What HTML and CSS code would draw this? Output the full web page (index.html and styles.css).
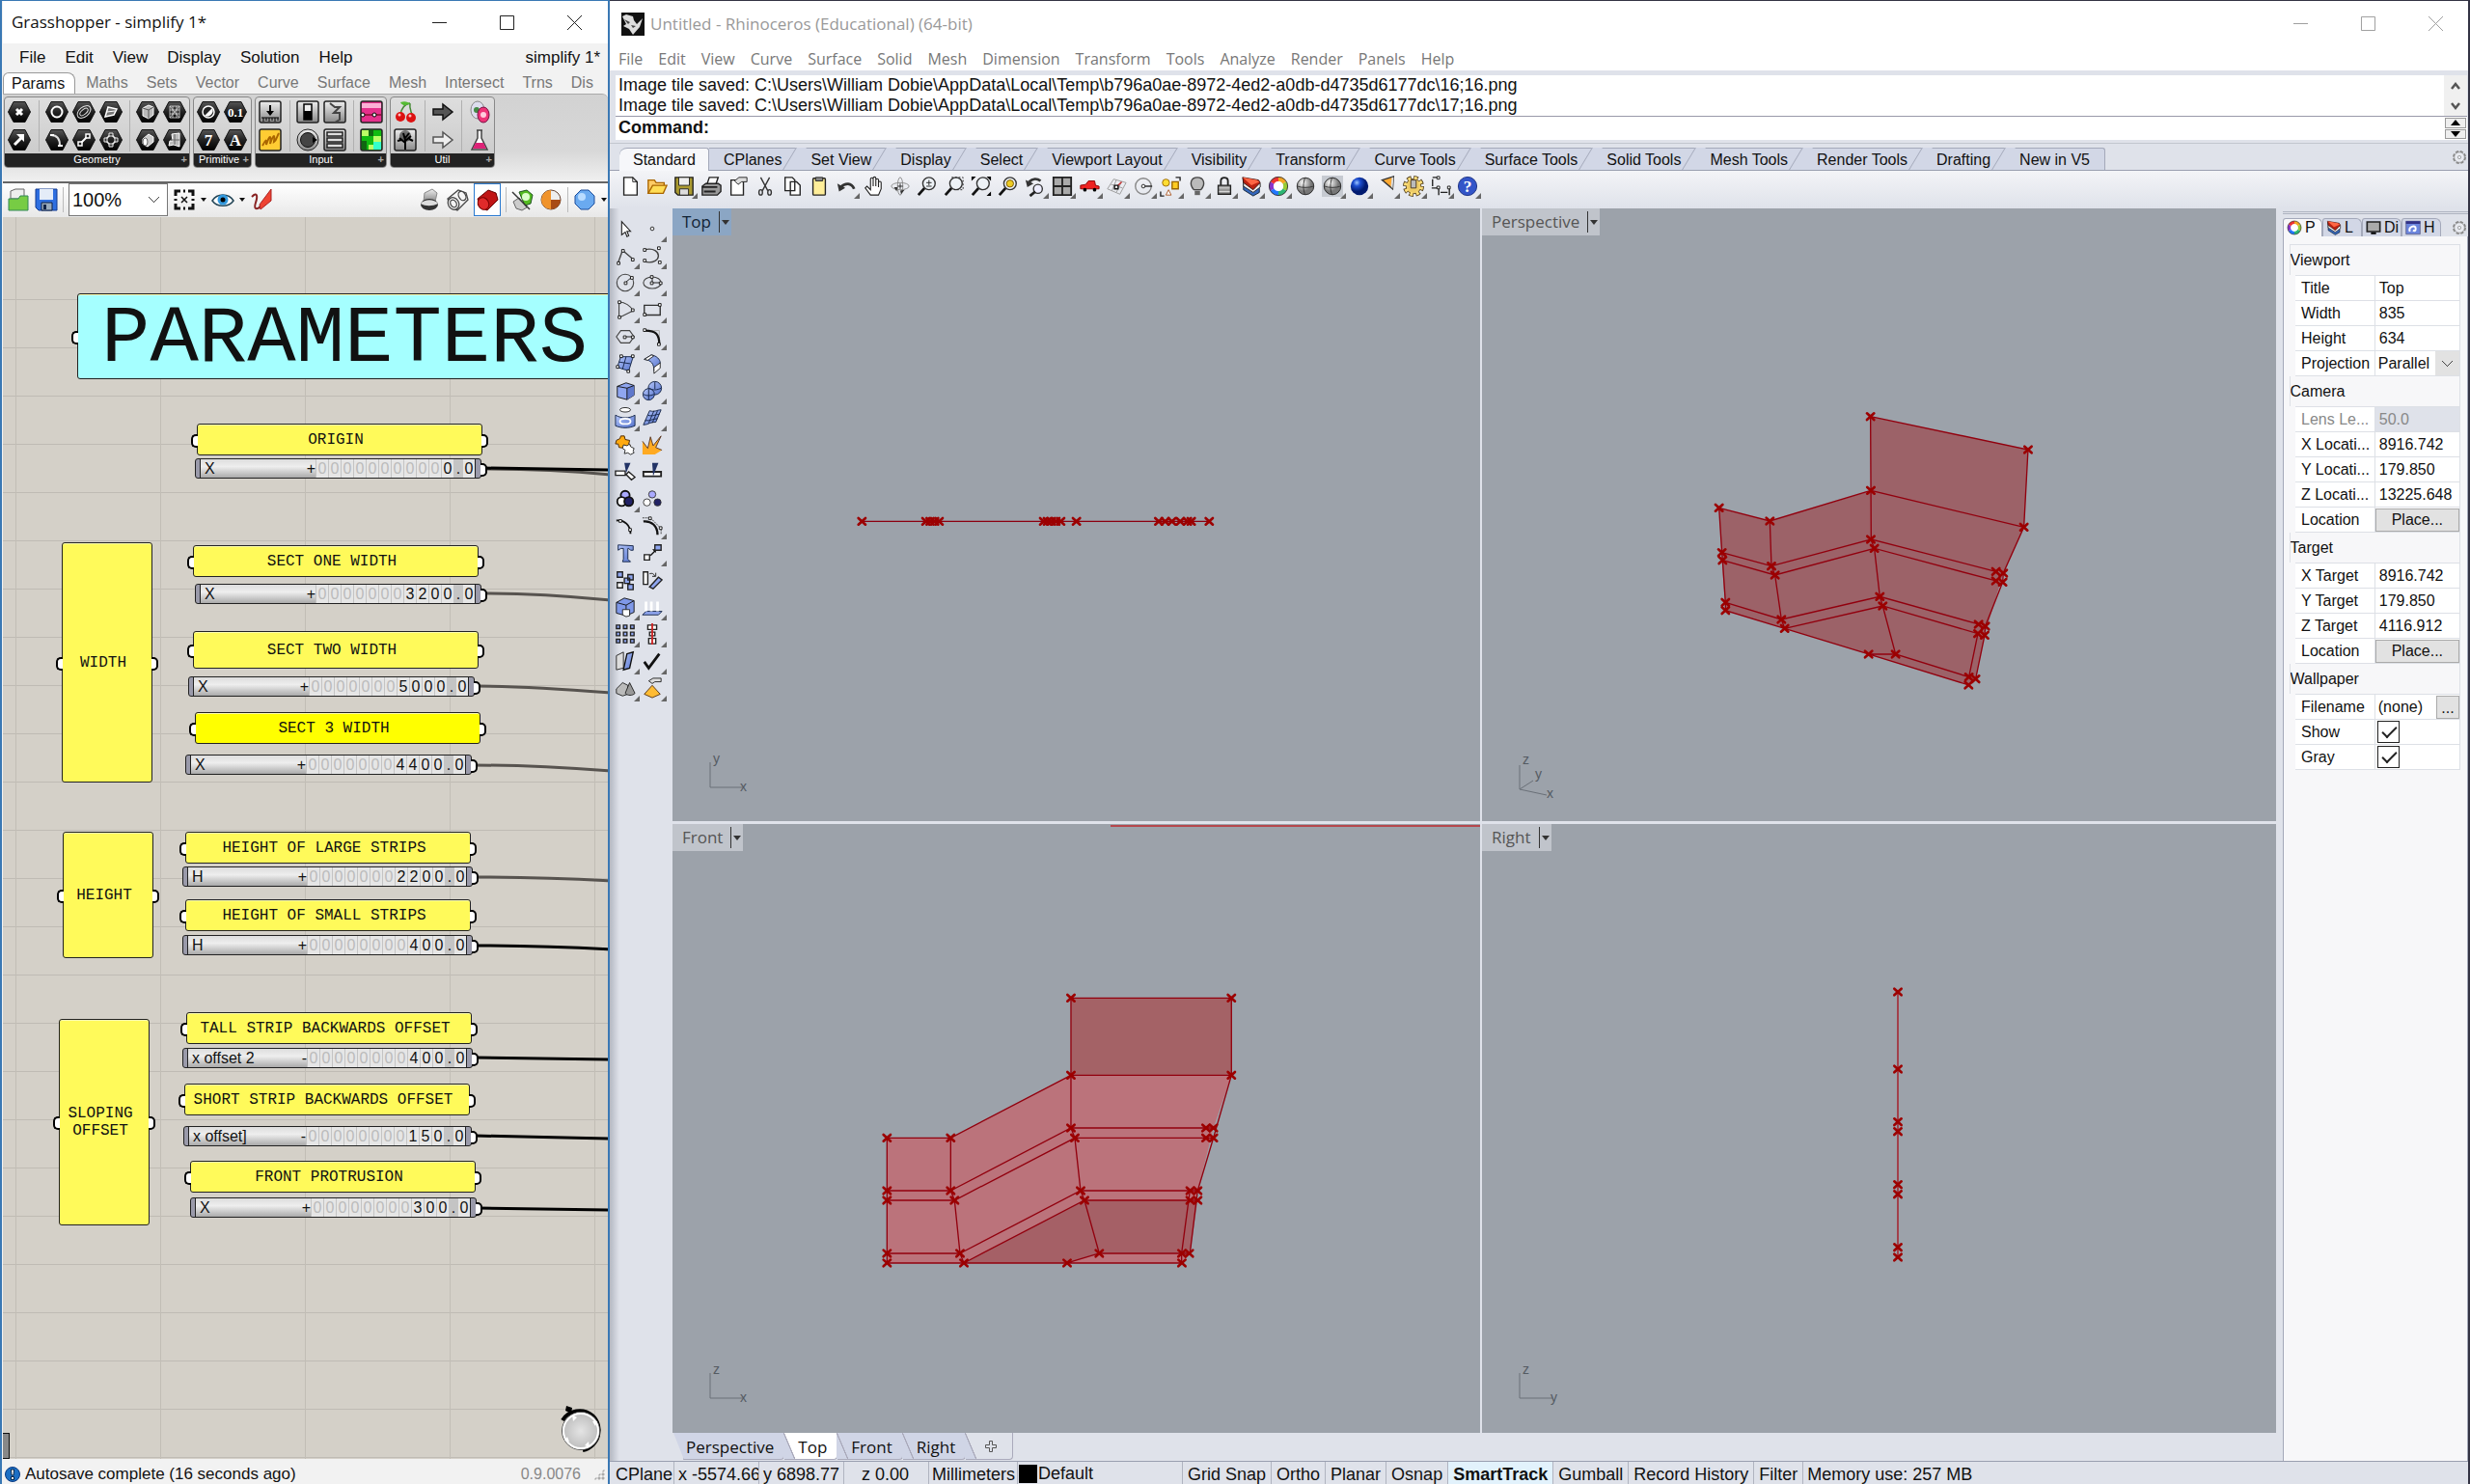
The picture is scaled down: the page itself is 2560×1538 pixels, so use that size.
FILE: index.html
```html
<!DOCTYPE html>
<html lang="en">
<head>
<meta charset="utf-8">
<title>Grasshopper and Rhinoceros</title>
<link rel="stylesheet" href="styles.css">
</head>
<body>
<svg class="defs" aria-hidden="true">
  <defs>
    <linearGradient id="dark" x1="0" y1="0" x2="0" y2="1"><stop offset="0" stop-color="#555"/><stop offset=".5" stop-color="#222"/><stop offset="1" stop-color="#000"/></linearGradient>
    <linearGradient id="metal" x1="0" y1="0" x2="0" y2="1"><stop offset="0" stop-color="#eee"/><stop offset="1" stop-color="#888"/></linearGradient>
    <linearGradient id="blue" x1="0" y1="0" x2="1" y2="1"><stop offset="0" stop-color="#b4c6fa"/><stop offset="1" stop-color="#5472cc"/></linearGradient>
    <radialGradient id="ballgrey" cx=".35" cy=".3"><stop offset="0" stop-color="#fff"/><stop offset="1" stop-color="#777"/></radialGradient>
    <radialGradient id="ballblue" cx=".35" cy=".3"><stop offset="0" stop-color="#9bc4ff"/><stop offset=".4" stop-color="#1d4ed0"/><stop offset="1" stop-color="#001a70"/></radialGradient>
    <radialGradient id="knob"><stop offset="0" stop-color="#e4e4e4"/><stop offset="1" stop-color="#bcbcbc"/></radialGradient>
    <symbol id="hex" viewBox="0 0 24 22"><path d="M6 .5h12L23.500 11 18 21.500H6L.5 11z" fill="url(#dark)" stroke="#111"/></symbol>
    <symbol id="box" viewBox="0 0 24 24"><rect x="1" y="1" width="22" height="22" rx="2" fill="url(#metal)" stroke="#222" stroke-width="1.500"/></symbol>
    <g id="x"><path d="M3 4 25 24M3 24 25 4" stroke="#9c0000" stroke-width="8" stroke-linecap="round"/></g>
    <symbol id="wheel" viewBox="0 0 24 24"><g fill="none" stroke-width="5"><path d="M12 4a8 8 0 0 1 7 4" stroke="#f5a623"/><path d="M19 8a8 8 0 0 1 0 8" stroke="#9c3"/><path d="M19 16a8 8 0 0 1-7 4" stroke="#2bb673"/><path d="M12 20a8 8 0 0 1-7-4" stroke="#27f"/><path d="M5 16a8 8 0 0 1 0-8" stroke="#83c"/><path d="M5 8a8 8 0 0 1 7-4" stroke="#e33"/></g><circle cx="12" cy="12" r="10.500" fill="none" stroke="#333"/><circle cx="12" cy="12" r="5.500" fill="#fff"/></symbol>
    <symbol id="layers" viewBox="0 0 24 24"><path d="M3 4v12l11 7 7-4v-8z" fill="#36b" stroke="#123"/><path d="M3 3v9l11 7 8-6V9z" fill="#eee" stroke="#222"/><path d="M2 2l1 6 11 8 8-8-2-3z" fill="#b21" stroke="#311"/><path d="M2 2l10 9 9-4-3-2z" fill="#f64"/></symbol>
    <symbol id="gear" viewBox="0 0 24 24"><circle cx="12" cy="12" r="9" fill="none" stroke="#888" stroke-width="3" stroke-dasharray="4.700 2.370"/><circle cx="12" cy="12" r="8" fill="#e8eaf0" stroke="#888"/><circle cx="12" cy="12" r="2.500" fill="none" stroke="#888"/></symbol>
    <symbol id="lens" viewBox="0 0 24 24"><path d="M9 14 2 22" stroke="#111" stroke-width="3"/><circle cx="14" cy="9" r="7" fill="#eef4f8" fill-opacity=".7" stroke="#333" stroke-width="1.500"/></symbol>
  </defs>
</svg>

<div class="desktop">
<section class="gh" aria-label="Grasshopper">
  <header class="titlebar">
    <h1>Grasshopper - simplify 1*</h1>
    <div class="winbtns">
      <button aria-label="Minimize"><svg viewBox="0 0 16 16"><path d="M0 8h16"/></svg></button>
      <button aria-label="Maximize"><svg viewBox="0 0 16 16"><path d="M.5.5h15v15H.5z"/></svg></button>
      <button aria-label="Close"><svg viewBox="0 0 16 16"><path d="M0 0l16 16M16 0 0 16"/></svg></button>
    </div>
  </header>
  <nav class="gh-menu">
    <button>File</button><button>Edit</button><button>View</button><button>Display</button><button>Solution</button><button>Help</button>
    <span class="doc">simplify 1*</span>
  </nav>
  <nav class="gh-tabs">
    <button class="on">Params</button><button>Maths</button><button>Sets</button><button>Vector</button><button>Curve</button><button>Surface</button><button>Mesh</button><button>Intersect</button><button>Trns</button><button>Dis</button>
  </nav>
  <div class="ribbon">
    <section class="group g-geo">
      <div class="cells">
        <div class="cols c1">
          <svg viewBox="0 0 24 22"><use href="#hex"/><path d="M9 8l6 6M15 8l-6 6" stroke="#fff" stroke-width="3"/></svg>
          <svg viewBox="0 0 24 22"><use href="#hex"/><path d="M7 16l7-7" stroke="#fff" stroke-width="3"/><path d="M17 5v8l-8-8z" fill="#fff"/></svg>
        </div>
        <div class="cols c3">
          <svg viewBox="0 0 24 22"><use href="#hex"/><circle cx="12" cy="11" r="5.500" fill="none" stroke="#fff" stroke-width="2"/></svg>
          <svg viewBox="0 0 24 22"><use href="#hex"/><g fill="none" stroke="#ddd" transform="rotate(-40 12 11)"><ellipse cx="12" cy="11" rx="8" ry="5"/><ellipse cx="12" cy="11" rx="5" ry="2.500"/></g></svg>
          <svg viewBox="0 0 24 22"><use href="#hex"/><path d="M9 6l9 2-3 6-9 2z" fill="#777" stroke="#fff" stroke-width="1.500"/><path d="M8 11l8-1" stroke="#fff"/></svg>
          <svg viewBox="0 0 24 22"><use href="#hex"/><path d="M6 6c6 0 9 4 9 11" fill="none" stroke="#ddd" stroke-width="2"/><path d="M5 6h4M13 17h5" stroke="#fff" stroke-width="2"/></svg>
          <svg viewBox="0 0 24 22"><use href="#hex"/><path d="M8 15l8-8" stroke="#fff" stroke-width="2"/><path d="M6 13h4v4H6zM14 5h4v4h-4z" fill="#222" stroke="#fff" stroke-width="1.500"/></svg>
          <svg viewBox="0 0 24 22"><use href="#hex"/><path d="M12 5l6 6-6 6-6-6z" fill="none" stroke="#eee" stroke-width="1.500"/><path d="M10 4h4v3h-4zM10 15h4v3h-4zM5 9h3v4H5zM16 9h3v4h-3z" fill="#333" stroke="#eee"/></svg>
        </div>
        <div class="cols c2">
          <svg viewBox="0 0 24 22"><use href="#hex"/><path d="M7 7l6-3 5 2v8l-5 4-6-3z" fill="#bbb" stroke="#fff"/><path d="M13 9v9M7 7l6 2 5-3" stroke="#555" fill="none"/></svg>
          <svg viewBox="0 0 24 22"><use href="#hex"/><path d="M7 5h10v12H7zM10 5v12M14 5v12M7 9h10M7 13h10M7 5l10 12M17 5L7 17" fill="none" stroke="#ddd" stroke-width=".8"/></svg>
          <svg viewBox="0 0 24 22"><use href="#hex"/><path d="M7 10l6-5 5 3v5l-6 5-5-3z" fill="#ccc" stroke="#fff"/><ellipse cx="9.500" cy="13" rx="2.500" ry="4" fill="#fff" stroke="#666"/></svg>
          <svg viewBox="0 0 24 22"><use href="#hex"/><path d="M9 5l8-1v14l-6-2-5 1 1-5h3z" fill="#bbb" stroke="#fff"/><path d="M12 5v11M8 11h9" stroke="#666"/></svg>
        </div>
      </div>
      <h2>Geometry<b>+</b></h2>
    </section>
    <section class="group g-prim">
      <div class="cells">
        <div class="cols c2">
          <svg viewBox="0 0 24 22"><use href="#hex"/><circle cx="12" cy="11" r="6" fill="#222" stroke="#fff" stroke-width="1.500"/><path d="M16 7a6 6 0 0 1-8 8z" fill="#fff"/></svg>
          <svg viewBox="0 0 24 22"><use href="#hex"/><text class="hx mid" x="12" y="16">0.1</text></svg>
          <svg viewBox="0 0 24 22"><use href="#hex"/><text class="hx big" x="12" y="17">7</text></svg>
          <svg viewBox="0 0 24 22"><use href="#hex"/><text class="hx big" x="12" y="17">A</text></svg>
        </div>
      </div>
      <h2>Primitive<b>+</b></h2>
    </section>
    <section class="group g-in">
      <div class="cells">
        <div class="cols c1">
          <svg viewBox="0 0 24 24"><use href="#box"/><path d="M12 5v8" stroke="#000" stroke-width="2"/><path d="M8 11h8l-4 5z"/><path d="M3 18h18M5 18v4M8 18v3M11 18v4M14 18v3M17 18v4M20 18v3" stroke="#000"/></svg>
          <svg viewBox="0 0 24 24"><rect x="1" y="1" width="22" height="22" rx="2" fill="#fc3" stroke="#222" stroke-width="1.500"/><path d="M4 18c4-7 4-7 4-1 4-12 5-9 4-1 4-12 5-9 4-2 3-2 3-6 5-9" fill="none" stroke="#a60" stroke-width="2"/></svg>
        </div>
        <div class="cols c2">
          <svg viewBox="0 0 24 24"><use href="#box"/><path d="M8 4h8v16H8z" fill="#eee" stroke="#000" stroke-width="1.500"/><path d="M8 11h8v9H8z"/></svg>
          <svg viewBox="0 0 24 24"><use href="#box"/><path d="M7 3l5 4h5l-6 6h6v7l-5 3" fill="none" stroke="#444" stroke-width="2"/></svg>
          <svg viewBox="0 0 24 24"><circle cx="12" cy="12" r="11" fill="url(#metal)" stroke="#222"/><circle cx="12" cy="12" r="7.500" fill="#444" stroke="#111"/><path d="M17 9l5 3-5 3z"/></svg>
          <svg viewBox="0 0 24 24"><use href="#box"/><path d="M4 4h16v4H4zM4 10h16v4H4zM4 16h16v4H4z" fill="#ddd" stroke="#222" stroke-width="1.500"/></svg>
        </div>
        <div class="cols c1">
          <svg viewBox="0 0 24 24"><rect x="1" y="1" width="22" height="22" rx="2" fill="#e5308c" stroke="#222" stroke-width="1.500"/><path d="M2 3h20v5H2z" fill="#fbb0d5"/><path d="M2 15h20" stroke="#500"/><circle cx="3" cy="15" r="2" fill="#fff" stroke="#000"/><circle cx="15" cy="15" r="2" fill="#fff" stroke="#000"/></svg>
          <svg viewBox="0 0 24 24"><rect x="1" y="1" width="22" height="22" rx="2" fill="#1b1" stroke="#222" stroke-width="1.500"/><path d="M2 2h7v6H2zM14 8h8v6h-8zM9 17h5v5H9z" fill="#bf6"/><path d="M9 2h5v6H9zM2 13h5v9H2z" fill="#161"/><path d="M14 14h8v8h-8z" fill="#3fc"/></svg>
        </div>
      </div>
      <h2>Input<b>+</b></h2>
    </section>
    <section class="group g-util">
      <div class="cells">
        <div class="cols c1">
          <svg viewBox="0 0 24 24"><path d="M7 15C8 8 11 4 17 3M17 3c-1 5 1 8 2 12" fill="none" stroke="#483" stroke-width="1.500"/><path d="M7 2c5-2 8 0 10 1-4 3-8 3-10-1z" fill="#5b3"/><circle cx="7" cy="17" r="5" fill="#d11"/><circle cx="18" cy="18" r="5" fill="#d11"/><circle cx="6" cy="15" r="1.500" fill="#fbb"/><circle cx="17" cy="16" r="1.500" fill="#fbb"/></svg>
          <svg viewBox="0 0 24 24"><use href="#box"/><path d="M12 22V12M12 15L6 10M12 13l6-5M12 12l-2-7M12 10l4-5M8 12l-4 1M16 11l4 2" stroke="#000" stroke-width="2"/><circle cx="12" cy="8" r="6" fill="#000" fill-opacity=".5"/></svg>
        </div>
        <div class="cols c1">
          <svg viewBox="0 0 24 24"><path d="M2 9h10V4l10 8-10 8v-5H2z" fill="#555" stroke="#111" stroke-width="1.500"/></svg>
          <svg viewBox="0 0 24 24"><path d="M2 9h10V4l10 8-10 8v-5H2z" fill="#eee" stroke="#555" stroke-width="1.500"/></svg>
        </div>
        <div class="cols c1">
          <svg viewBox="0 0 24 24"><ellipse cx="10" cy="10" rx="7" ry="9" fill="#dde" stroke="#888"/><circle cx="9" cy="10" r="3" fill="#484"/><ellipse cx="16" cy="15" rx="6" ry="8" fill="#e37" stroke="#714"/><circle cx="16" cy="15" r="3" fill="#fcd"/></svg>
          <svg viewBox="0 0 24 24"><path d="M9 2h6M10 2v8L4 22h16L14 10V2" fill="#fff" stroke="#444" stroke-width="1.500"/><path d="M8 15h8l3 6H5z" fill="#d27"/></svg>
        </div>
      </div>
      <h2>Util<b>+</b></h2>
    </section>
  </div>
  <div class="gh-bar">
    <button aria-label="Open"><svg viewBox="0 0 24 24"><path d="M4 9V3l5-2h9v10H4z" fill="#eee" stroke="#666"/><path d="M2 23V11h10l2-3h8v15z" fill="#7c4" stroke="#385"/></svg></button>
    <button aria-label="Save"><svg viewBox="0 0 24 24"><path d="M1 1h22v22H4l-3-3z" fill="#2f6fe0" stroke="#123a90"/><path d="M5 1h14v11H5z" fill="#e4ecf8"/><path d="M7 15h11v8H7z" fill="#9ab" stroke="#124"/><path d="M9 17h3v5H9z" fill="#124"/></svg></button>
    <i class="rule"></i>
    <select class="zoom" aria-label="Zoom"><option>100%</option></select>
    <button aria-label="Zoom extents"><svg viewBox="0 0 24 24"><path d="M3 8V3h5M16 3h5v5M21 16v5h-5M8 21H3v-5M3 11v2M21 11v2M11 3h2M11 21h2" fill="none" stroke="#111" stroke-width="3"/><path d="M9 9l6 6M15 9l-6 6" stroke="#111" stroke-width="1.500"/></svg></button><i class="drop"></i>
    <button aria-label="Named views"><svg viewBox="0 0 24 24"><path d="M1 13C6 5 18 5 23 13 18 20 6 20 1 13z" fill="#fff" stroke="#245" stroke-width="1.500"/><circle cx="12" cy="12" r="5.500" fill="#39d"/><circle cx="12" cy="12" r="2.500"/></svg></button><i class="drop"></i>
    <button aria-label="Sketch"><svg viewBox="0 0 24 24"><path d="M2 9c6-6 6 0 4 6s0 9 6 3" fill="none" stroke="#822" stroke-width="2"/><path d="M22 1v12L11 22l-1-5z" fill="#e43" stroke="#a22"/></svg></button>
    <span class="grow"></span>
    <button aria-label="No preview"><svg viewBox="0 0 24 24"><path d="M7 5l8-4 5 4-2 9H6z" fill="url(#metal)" stroke="#888"/><ellipse cx="12" cy="17" rx="9" ry="6" fill="#333"/><path d="M3 16c4-5 14-5 18 0-6 3-13 3-18 0z" fill="#ddd"/></svg></button>
    <button aria-label="Wireframe preview"><svg viewBox="0 0 24 24"><g fill="#f4f4f4" stroke="#444" stroke-width="1.300"><path d="M2 11L13 2l8 3 2 7-11 11-7-3z"/><ellipse cx="17" cy="8" rx="3.500" ry="5" transform="rotate(-30 17 8)"/><ellipse cx="8" cy="16" rx="5.500" ry="6.500" transform="rotate(-30 8 16)"/><ellipse cx="8" cy="16" rx="3" ry="4" transform="rotate(-30 8 16)"/></g></svg></button>
    <button class="picked" aria-label="Shaded preview"><svg viewBox="0 0 24 24"><path d="M2 11L13 2l8 3 2 7-11 11-7-3z" fill="#c01515" stroke="#600"/><ellipse cx="8" cy="16" rx="5.500" ry="6.500" transform="rotate(-30 8 16)" fill="#e02a2a" stroke="#700"/></svg></button>
    <i class="rule"></i>
    <button aria-label="Preview selected"><svg viewBox="0 0 24 24"><path d="M8 4l8-2 6 5-2 9-6 2z" fill="#5b2" stroke="#252"/><circle cx="15" cy="9" r="4" fill="#dfc"/><path d="M2 14l6-4 8 10-5 3-6-2z" fill="#ccc" stroke="#666"/><path d="M1 4l18 18" stroke="#333" stroke-width="1.500"/></svg></button>
    <button aria-label="Preview quality"><svg viewBox="0 0 24 24"><circle cx="12" cy="12" r="10" fill="#eee" stroke="#643"/><path d="M12 2a10 10 0 0 0 0 20z" fill="#f0932b"/><path d="M12 12h10a10 10 0 0 1-10 10z" fill="#a84b16"/></svg></button>
    <i class="rule"></i>
    <button aria-label="Mesh quality"><svg viewBox="0 0 24 24"><path d="M8 2h8l6 6v8l-6 6H8l-6-6V8z" fill="#6aaaf0" stroke="#1c4d9a"/><circle cx="9" cy="9" r="4" fill="#b9dcff"/></svg></button><i class="drop"></i>
  </div>

  <div class="canvas">
    <svg class="wires" aria-hidden="true">
      <g fill="none" stroke="#57534f" stroke-width="3">
        <path d="M498 261c50 0 90 2 132 6"/><path d="M498 390c50 0 90 3 132 7"/><path d="M490 486c50 0 90 3 140 7"/><path d="M487 568c50 0 90 2 143 6"/><path d="M489 684c50 0 90 1 141 4"/>
      </g>
      <g fill="none" stroke="#000" stroke-width="3">
        <path d="M498 260l132 2"/><path d="M489 755c50 0 90 1 141 4"/><path d="M489 871l141 2"/><path d="M489 952l141 3"/><path d="M493 1027l137 2"/>
      </g>
    </svg>
    <div class="node title" style="left:77px;top:79px;width:700px;height:89px">PARAMETERS</div>
    <div class="node" style="left:201px;top:214px;width:296px;height:33px">ORIGIN</div>
    <div class="slider" style="left:199px;top:250px;width:297px"><label>X</label><output>+<i>0</i><i>0</i><i>0</i><i>0</i><i>0</i><i>0</i><i>0</i><i>0</i><i>0</i><i>0</i><b>0</b><u>.</u><b>0</b></output></div>
    <div class="node" style="left:61px;top:337px;width:94px;height:249px">WIDTH</div>
    <div class="node" style="left:197px;top:340px;width:296px;height:33px">SECT ONE WIDTH</div>
    <div class="slider" style="left:199px;top:380px;width:297px"><label>X</label><output>+<i>0</i><i>0</i><i>0</i><i>0</i><i>0</i><i>0</i><i>0</i><b>3</b><b>2</b><b>0</b><b>0</b><u>.</u><b>0</b></output></div>
    <div class="node" style="left:197px;top:429px;width:296px;height:39px">SECT TWO WIDTH</div>
    <div class="slider" style="left:192px;top:476px;width:297px"><label>X</label><output>+<i>0</i><i>0</i><i>0</i><i>0</i><i>0</i><i>0</i><i>0</i><b>5</b><b>0</b><b>0</b><b>0</b><u>.</u><b>0</b></output></div>
    <div class="node hot" style="left:199px;top:513px;width:296px;height:33px">SECT 3 WIDTH</div>
    <div class="slider" style="left:189px;top:557px;width:297px"><label>X</label><output>+<i>0</i><i>0</i><i>0</i><i>0</i><i>0</i><i>0</i><i>0</i><b>4</b><b>4</b><b>0</b><b>0</b><u>.</u><b>0</b></output></div>
    <div class="node" style="left:62px;top:637px;width:94px;height:131px">HEIGHT</div>
    <div class="node" style="left:189px;top:637px;width:296px;height:33px">HEIGHT OF LARGE STRIPS</div>
    <div class="slider" style="left:186px;top:673px;width:301px"><label>H</label><output>+<i>0</i><i>0</i><i>0</i><i>0</i><i>0</i><i>0</i><i>0</i><b>2</b><b>2</b><b>0</b><b>0</b><u>.</u><b>0</b></output></div>
    <div class="node" style="left:189px;top:707px;width:296px;height:33px">HEIGHT OF SMALL STRIPS</div>
    <div class="slider" style="left:186px;top:744px;width:301px"><label>H</label><output>+<i>0</i><i>0</i><i>0</i><i>0</i><i>0</i><i>0</i><i>0</i><i>0</i><b>4</b><b>0</b><b>0</b><u>.</u><b>0</b></output></div>
    <div class="node" style="left:58px;top:831px;width:94px;height:214px">SLOPING OFFSET</div>
    <div class="node" style="left:190px;top:824px;width:296px;height:33px">TALL STRIP BACKWARDS OFFSET</div>
    <div class="slider" style="left:186px;top:861px;width:301px"><label>x offset 2</label><output>-<i>0</i><i>0</i><i>0</i><i>0</i><i>0</i><i>0</i><i>0</i><i>0</i><b>4</b><b>0</b><b>0</b><u>.</u><b>0</b></output></div>
    <div class="node" style="left:188px;top:898px;width:296px;height:33px">SHORT STRIP BACKWARDS OFFSET</div>
    <div class="slider" style="left:187px;top:942px;width:299px"><label>x offset]</label><output>-<i>0</i><i>0</i><i>0</i><i>0</i><i>0</i><i>0</i><i>0</i><i>0</i><b>1</b><b>5</b><b>0</b><u>.</u><b>0</b></output></div>
    <div class="node" style="left:194px;top:978px;width:296px;height:33px">FRONT PROTRUSION</div>
    <div class="slider" style="left:194px;top:1016px;width:297px"><label>X</label><output>+<i>0</i><i>0</i><i>0</i><i>0</i><i>0</i><i>0</i><i>0</i><i>0</i><b>3</b><b>0</b><b>0</b><u>.</u><b>0</b></output></div>
    <i class="stub"></i>
    <svg class="compass" viewBox="0 0 48 52" aria-hidden="true"><path d="M5 17A21 21 0 0 1 36 12 21 21 0 0 1 26 48" fill="none" stroke="#000" stroke-width="4"/><path d="M9 2l6 2-1 6-6-3z"/><circle cx="24" cy="28" r="19.500" fill="url(#knob)" stroke="#555"/><circle cx="24" cy="28" r="18" fill="none" stroke="#fff" stroke-width="2"/><path d="M15 11l5 3-4 4zM41 18l-5 0 3 5zM33 45l-1-6-4 4zM7 38l3-4 2 5z" fill="#fff"/></svg>
  </div>
  <footer class="gh-status">
    <svg viewBox="0 0 16 16"><circle cx="8" cy="8" r="7.500" fill="#1c6fc4" stroke="#0a3a80"/><path d="M6.500 3h3l-.5 6H7zM6.500 10.500h3v3h-3z" fill="#fff" stroke="#024"/></svg>
    <span>Autosave complete (16 seconds ago)</span><span class="ver">0.9.0076</span><i class="grip"></i>
  </footer>
</section>

<section class="rh" aria-label="Rhinoceros">
  <header class="titlebar dim">
    <svg class="logo" viewBox="0 0 24 24"><path d="M0 0h24v24H0z" fill="#111"/><path d="M1 4l4-2 7 2 1 4 3 4 6-6-3 9-7 8-4-6-6-3 3-2z" fill="#ddd"/><path d="M3 7l6 3-2 2zM10 13l5 1-3 2z" fill="#444"/></svg>
    <h1>Untitled - Rhinoceros (Educational) (64-bit)</h1>
    <div class="winbtns">
      <button aria-label="Minimize"><svg viewBox="0 0 16 16"><path d="M0 8h16"/></svg></button>
      <button aria-label="Maximize"><svg viewBox="0 0 16 16"><path d="M.5.5h15v15H.5z"/></svg></button>
      <button aria-label="Close"><svg viewBox="0 0 16 16"><path d="M0 0l16 16M16 0 0 16"/></svg></button>
    </div>
  </header>
  <nav class="rh-menu">
    <button>File</button><button>Edit</button><button>View</button><button>Curve</button><button>Surface</button><button>Solid</button><button>Mesh</button><button>Dimension</button><button>Transform</button><button>Tools</button><button>Analyze</button><button>Render</button><button>Panels</button><button>Help</button>
  </nav>
  <div class="command">
    <div class="history">
      <p>Image tile saved: C:\Users\William Dobie\AppData\Local\Temp\b796a0ae-8972-4ed2-a0db-d4735d6177dc\16;16.png</p>
      <p>Image tile saved: C:\Users\William Dobie\AppData\Local\Temp\b796a0ae-8972-4ed2-a0db-d4735d6177dc\17;16.png</p>
    </div>
    <div class="scroll"><svg viewBox="0 0 24 42"><path d="M8 14l4-5 4 5M8 29l4 5 4-5" fill="none" stroke="#555" stroke-width="2.500"/></svg></div>
    <div class="prompt"><label for="cmd">Command:</label><input id="cmd"></div>
    <div class="spin"><button aria-label="Previous"><svg viewBox="0 0 10 6"><path d="M5 0l5 6H0z"/></svg></button><button aria-label="Next"><svg viewBox="0 0 10 6"><path d="M0 0h10L5 6z"/></svg></button></div>
  </div>
  <nav class="rh-tabs">
    <button class="on">Standard</button><button>CPlanes</button><button>Set View</button><button>Display</button><button>Select</button><button>Viewport Layout</button><button>Visibility</button><button>Transform</button><button>Curve Tools</button><button>Surface Tools</button><button>Solid Tools</button><button>Mesh Tools</button><button>Render Tools</button><button>Drafting</button><button>New in V5</button>
    <button class="cog" aria-label="Toolbar options"><svg viewBox="0 0 24 24"><use href="#gear"/></svg></button>
  </nav>
  <div class="rh-bar">
    <button aria-label="New"><svg viewBox="0 0 24 24"><path d="M5 2h10l5 5v15H5z" fill="#fff" stroke="#222" stroke-width="1.500"/><path d="M15 2v5h5" fill="none" stroke="#222"/></svg></button>
    <button aria-label="Open"><svg viewBox="0 0 24 24"><path d="M2 20V5h7l2 3h9v3" fill="#fc6" stroke="#a60" stroke-width="1.500"/><path d="M2 20l5-9h16l-4 9z" fill="#fd5" stroke="#a60" stroke-width="1.500"/></svg></button>
    <button class="fly" aria-label="Save"><svg viewBox="0 0 24 24"><path d="M2 2h20v20H5l-3-3z" fill="#aa9a30" stroke="#222" stroke-width="1.500"/><path d="M6 2h12v9H6z" fill="#eee" stroke="#222"/><path d="M7 15h10v7H7z" fill="#ddd" stroke="#222"/></svg></button>
    <button aria-label="Print"><svg viewBox="0 0 24 24"><path d="M7 11l3-9h10l-3 9" fill="#fff" stroke="#222" stroke-width="1.500"/><path d="M2 12l4-3h14l3 2v7l-4 4H2z" fill="#999" stroke="#222" stroke-width="1.500"/><path d="M2 13h17M4 18h13" stroke="#222" stroke-width="2"/></svg></button>
    <button aria-label="Properties"><svg viewBox="0 0 24 24"><path d="M4 5h14v17H4z" fill="#fff" stroke="#222" stroke-width="1.500"/><path d="M8 6l5-4h9v5h-6l-4 3z" fill="#ddd" stroke="#222"/></svg></button>
    <button aria-label="Cut"><svg viewBox="0 0 24 24"><path d="M7 2l8 15M17 2L9 17" stroke="#333" stroke-width="1.500"/><ellipse cx="7" cy="19" rx="2" ry="3" fill="none" stroke="#333" stroke-width="1.500"/><ellipse cx="17" cy="19" rx="2" ry="3" fill="none" stroke="#333" stroke-width="1.500"/></svg></button>
    <button aria-label="Copy"><svg viewBox="0 0 24 24"><path d="M4 2h8l3 3v12H4zM10 7h7l4 4v11H10z" fill="#fff" stroke="#222" stroke-width="1.500"/></svg></button>
    <button aria-label="Paste"><svg viewBox="0 0 24 24"><rect x="5" y="3" width="14" height="19" rx="1" fill="#fe9" stroke="#222" stroke-width="1.500"/><path d="M8 2h8v4H8z" fill="#888" stroke="#222"/></svg></button>
    <button class="fly" aria-label="Undo"><svg viewBox="0 0 24 24"><path d="M6 13c5-5 12-5 15 2" fill="none" stroke="#333" stroke-width="3"/><path d="M2 9l2 9 7-4z" fill="#333"/></svg></button>
    <button aria-label="Pan"><svg viewBox="0 0 24 24"><path d="M9 22L3 14l2-2 4 4V4c0-2 3-2 3 0v8V3c0-2 3-2 3 0v9-7c0-2 3-2 3 0v8-5c0-2 3-2 3 0v7l-3 7z" fill="#fff" stroke="#222" stroke-width="1.200"/></svg></button>
    <button aria-label="Rotate view"><svg viewBox="0 0 24 24"><g fill="none" stroke="#888"><ellipse cx="12" cy="12" rx="10" ry="4"/><ellipse cx="12" cy="12" rx="3" ry="10"/></g><path d="M12 9v6M9 12h6" stroke="#222"/><path d="M5 13l4 0-1 5zM13 21l4-5-5 1z" fill="#333"/></svg></button>
    <button aria-label="Zoom"><svg viewBox="0 0 24 24"><use href="#lens"/><path d="M11 8h6M14 5v6M11 12h6" stroke="#222"/></svg></button>
    <button aria-label="Zoom window"><svg viewBox="0 0 24 24"><use href="#lens"/><path d="M9 2h13v14H12" fill="none" stroke="#222" stroke-dasharray="2 2"/></svg></button>
    <button aria-label="Zoom all"><svg viewBox="0 0 24 24"><use href="#lens"/><path d="M1 6V1h5zM18 1h5v5zM18 23h5v-5z"/></svg></button>
    <button aria-label="Zoom selected"><svg viewBox="0 0 24 24"><use href="#lens"/><circle cx="14" cy="9" r="4" fill="#ec2" stroke="#750"/></svg></button>
    <button class="fly" aria-label="Undo view"><svg viewBox="0 0 24 24"><circle cx="15" cy="15" r="5" fill="#eef" stroke="#333" stroke-width="1.500"/><path d="M12 18l-6 5" stroke="#222" stroke-width="3"/><path d="M5 7c4-4 9-4 13-1" fill="none" stroke="#333" stroke-width="3"/><path d="M1 5l2 8 7-4z" fill="#333"/></svg></button>
    <button class="fly" aria-label="Four views"><svg viewBox="0 0 24 24"><path d="M2 2h20v20H2zM12 2v20M2 12h20" fill="#aaa" stroke="#222" stroke-width="2"/></svg></button>
    <button class="fly" aria-label="Set view"><svg viewBox="0 0 24 24"><path d="M2 15v-4l6-1 3-4h7l1 5 4 1v3z" fill="#e22" stroke="#800"/><circle cx="7" cy="16" r="2"/><circle cx="18" cy="16" r="2"/></svg></button>
    <button class="fly" aria-label="Set CPlane"><svg viewBox="0 0 24 24"><path d="M2 15L9 4l14 4-7 13zM6 10l13 4M12 5l-5 12M18 7l-6 12" fill="none" stroke="#999"/><path d="M12 13l6-6" stroke="#c33" stroke-width="1.500"/><path d="M10 11h4v4h-4z" fill="#fff" stroke="#111" stroke-width="1.500"/></svg></button>
    <button class="fly" aria-label="Circle"><svg viewBox="0 0 24 24"><circle cx="12" cy="12" r="9" fill="none" stroke="#888" stroke-width="1.500"/><path d="M13 12h9" stroke="#222" stroke-width="1.500"/><circle cx="12" cy="12" r="2" fill="#fff" stroke="#222"/></svg></button>
    <button class="fly" aria-label="Select"><svg viewBox="0 0 24 24"><circle cx="7" cy="8" r="4" fill="#fd3" stroke="#960"/><path d="M14 7h7v8h-7z" fill="#fc2" stroke="#960" stroke-width="1.500"/><path d="M7 22l3-6 3 6z" fill="#fff" stroke="#a52"/><path d="M18 2h5v4M1 18v5h4" fill="none" stroke="#222" stroke-width="1.500"/></svg></button>
    <button class="fly" aria-label="Hide"><svg viewBox="0 0 24 24"><path d="M8 16C2 9 5 2 12 2s10 7 4 14z" fill="#bbb" stroke="#444" stroke-width="1.500"/><path d="M9 17h6v5H9z" fill="#666"/></svg></button>
    <button class="fly" aria-label="Lock"><svg viewBox="0 0 24 24"><path d="M8 11V6c0-5 8-5 8 0v5" fill="none" stroke="#222" stroke-width="2"/><path d="M5 11h14v10H5z" fill="#999" stroke="#222" stroke-width="1.500"/><path d="M6 14h12M6 18h12" stroke="#ddd"/></svg></button>
    <button class="fly" aria-label="Layers"><svg viewBox="0 0 24 24"><use href="#layers"/></svg></button>
    <button class="fly" aria-label="Properties wheel"><svg viewBox="0 0 24 24"><use href="#wheel"/></svg></button>
    <button aria-label="Shade"><svg viewBox="0 0 24 24"><circle cx="12" cy="12" r="9.500" fill="url(#ballgrey)" stroke="#222"/><path d="M3 12c5 2 13 2 18 0M12 2c-3 5-3 15 0 20" fill="none" stroke="#333"/></svg></button>
    <button class="fly" aria-label="Shade selected"><svg viewBox="0 0 24 24"><rect width="24" height="24" fill="#c6cad1"/><circle cx="12" cy="12" r="9.500" fill="url(#ballgrey)" stroke="#222"/><path d="M3 12c5 2 13 2 18 0M12 2c-3 5-3 15 0 20" fill="none" stroke="#333"/></svg></button>
    <button class="fly" aria-label="Render"><svg viewBox="0 0 24 24"><circle cx="12" cy="12" r="10" fill="url(#ballblue)"/></svg></button>
    <button class="fly" aria-label="Spotlight"><svg viewBox="0 0 24 24"><path d="M7 5l13-4-1 14z" fill="#fa3" stroke="#333" stroke-width="1.500"/><path d="M18 2l2 0-1 13-2-3z" fill="#ddd"/></svg></button>
    <button class="fly" aria-label="Options"><svg viewBox="0 0 24 24"><circle cx="12" cy="12" r="9" fill="none" stroke="#542" stroke-width="6" stroke-dasharray="4.500 2.570"/><circle cx="12" cy="12" r="8.500" fill="#ec6" stroke="#542"/><circle cx="12" cy="12" r="9" fill="none" stroke="#fd7" stroke-width="4" stroke-dasharray="3 4.070" stroke-dashoffset="-.7"/><path d="M9 5h6v9H9z" fill="#bbb" stroke="#432"/></svg></button>
    <button class="fly" aria-label="Dimensions"><svg viewBox="0 0 24 24"><path d="M3 2h7M3 4v8M2 14h8v8M22 12v10M12 19h8" fill="none" stroke="#222" stroke-width="1.500"/><path d="M8 1h3v3H8zM8 12h3v3H8zM20 12h3v3h-3z" fill="#fff" stroke="#111"/></svg></button>
    <button class="fly" aria-label="Help"><svg viewBox="0 0 24 24"><circle cx="12" cy="12" r="10.500" fill="#3355c8" stroke="#1a2f80"/><text class="q" x="12" y="19">?</text></svg></button>
  </div>

  <div class="work">
    <div class="palette">
      <button aria-label="Select"><svg viewBox="0 0 24 24"><path d="M8 4v15l4-3 2 5 2-1-2-5h4z" fill="#fff" stroke="#222" stroke-width="1.200"/></svg></button>
      <button class="fly" aria-label="Point"><svg viewBox="0 0 24 24"><circle cx="12" cy="12" r="2" fill="#fff" stroke="#222"/></svg></button>
      <button class="fly" aria-label="Polyline"><svg viewBox="0 0 24 24"><path d="M4 20L9 6l12 10" fill="none" stroke="#444" stroke-width="1.500"/><path d="M3 19h3v3H3zM8 5h3v3H8zM19 15h3v3h-3z" fill="#fff" stroke="#111"/></svg></button>
      <button class="fly" aria-label="Curve"><svg viewBox="0 0 24 24"><path d="M4 5c20-4 20 18 0 14" fill="none" stroke="#444" stroke-width="1.500"/><path d="M2 4h3v3H2zM18 2h3v3h-3zM2 16h3v3H2zM19 18h3v3h-3z" fill="#fff" stroke="#111"/></svg></button>
      <button class="fly" aria-label="Circle"><svg viewBox="0 0 24 24"><circle cx="12" cy="12" r="9.500" fill="none" stroke="#444" stroke-width="1.200"/><path d="M12 12l7-6" stroke="#111"/><path d="M11 11h3v3h-3zM18 5h3v3h-3z" fill="#fff" stroke="#111"/></svg></button>
      <button class="fly" aria-label="Ellipse"><svg viewBox="0 0 24 24"><ellipse cx="12" cy="12" rx="10" ry="6.500" fill="none" stroke="#444" stroke-width="1.200"/><path d="M12 6v6h9" fill="none" stroke="#111"/><path d="M10 4h3v3h-3zM10 11h3v3h-3zM20 11h3v3h-3z" fill="#fff" stroke="#111"/></svg></button>
      <button class="fly" aria-label="Arc"><svg viewBox="0 0 24 24"><path d="M5 20V3c8 1 13 5 16 10L5 21" fill="none" stroke="#444" stroke-width="1.200"/><path d="M4 2h3v3H4zM4 19h3v3H4zM19 11h3v3h-3z" fill="#fff" stroke="#111"/></svg></button>
      <button class="fly" aria-label="Rectangle"><svg viewBox="0 0 24 24"><path d="M3 7h18v11H3z" fill="none" stroke="#333" stroke-width="1.500"/><path d="M2 16h3v3H2zM19 5h3v3h-3z" fill="#fff" stroke="#111"/></svg></button>
      <button class="fly" aria-label="Polygon"><svg viewBox="0 0 24 24"><path d="M7 5h10l5 7-5 7H7l-5-7z" fill="none" stroke="#444" stroke-width="1.200"/><path d="M12 12h9" stroke="#111"/><path d="M10 11h3v3h-3zM19 11h3v3h-3z" fill="#fff" stroke="#111"/></svg></button>
      <button class="fly" aria-label="Fillet curves"><svg viewBox="0 0 24 24"><path d="M4 5h16v16" fill="none" stroke="#aaa"/><path d="M4 5c12 0 16 4 16 16" fill="none" stroke="#111" stroke-width="2.500"/><path d="M2 3h3v3H2zM18 19h3v3h-3z" fill="#fff" stroke="#111"/></svg></button>
      <button class="fly" aria-label="Surface from points"><svg viewBox="0 0 24 24"><path d="M7 4h14l-5 16-13-4z" fill="url(#blue)" stroke="#124"/><path d="M5 10l13 2M13 4l-4 14" stroke="#124"/><path d="M6 2h3v3H6zM19 2h3v3h-3zM2 14h3v3H2zM14 19h3v3h-3z" fill="#fff" stroke="#111"/></svg></button>
      <button class="fly" aria-label="Fillet surfaces"><svg viewBox="0 0 24 24"><path d="M3 7l8-5c6 1 10 5 10 9l-7 9c0-8-3-12-11-13z" fill="url(#blue)" stroke="#124"/><path d="M3 7l8-5 3 1-7 5zM14 16l7-5v6l-7 6z" fill="#fff" stroke="#222"/></svg></button>
      <button class="fly" aria-label="Box"><svg viewBox="0 0 24 24"><path d="M3 7l10-4 9 3v11l-8 5-11-3z" fill="#8fa6f0" stroke="#111"/><path d="M14 9v13l8-5V6z" fill="#5f78cc"/><path d="M3 7l11 2 8-3M14 9v13" fill="none" stroke="#111"/></svg></button>
      <button class="fly" aria-label="Boolean union"><svg viewBox="0 0 24 24"><circle cx="15" cy="9" r="7.500" fill="url(#blue)" stroke="#124"/><circle cx="8" cy="16" r="6.500" fill="url(#blue)" stroke="#124"/><path d="M8 9c5 3 10 2 14 0M15 2v8M2 16c4 2 8 2 12 0M8 10v12" fill="none" stroke="#124"/></svg></button>
      <button class="fly" aria-label="Project curves"><svg viewBox="0 0 24 24"><ellipse cx="12" cy="3" rx="6" ry="2.500" fill="#fff" stroke="#222"/><path d="M1 9c7 4 15 4 22 0v12c-7 3-15 3-22 0z" fill="url(#blue)" stroke="#124"/><ellipse cx="12" cy="16" rx="6" ry="3" fill="none" stroke="#fff" stroke-width="2"/></svg></button>
      <button class="fly" aria-label="Mesh"><svg viewBox="0 0 24 24"><path d="M9 4c6 2 8-1 13-1l-6 14c-6-1-8 3-14 3z" fill="url(#blue)" stroke="#124"/><path d="M7 9c6 2 8-1 13-1M4 15c6 1 8-2 14-2M14 4L8 18M18 4l-6 14" fill="none" stroke="#124"/></svg></button>
      <button aria-label="Join"><svg viewBox="0 0 24 24"><path d="M2 7l4-2 1-3h4l1 4 5 1-1 4 2 2-4 3-9-1-1-4H1z" fill="#fa1" stroke="#420"/><path d="M10 12l4 1 3-2 1 3 4 2-1 3 1 2-4 2-3-2-4 1 1-4-3-2z" fill="#fff" stroke="#222"/></svg></button>
      <button aria-label="Explode"><svg viewBox="0 0 24 24"><path d="M1 23V8l6 8 3-13 3 10 9-11-6 13 7 3-8 5z" fill="#fa2"/><path d="M1 8l6 8 3-13 3 10 9-11-6 13 7 3" fill="none" stroke="#532"/></svg></button>
      <button aria-label="Trim"><svg viewBox="0 0 24 24"><path d="M1 11h11v5H1zM13 15l3-3 7 6-4 3z" fill="#fff" stroke="#222" stroke-width="1.500"/><path d="M11 2h7l-5 11z" fill="#236"/></svg></button>
      <button aria-label="Split"><svg viewBox="0 0 24 24"><path d="M2 12h20v5H2z" fill="#fff" stroke="#222" stroke-width="2"/><path d="M12 2h7l-6 15z" fill="#236"/></svg></button>
      <button class="fly" aria-label="Group"><svg viewBox="0 0 24 24"><g stroke="#111" stroke-width="2"><circle cx="12" cy="8" r="5" fill="#aaf"/><circle cx="8" cy="15" r="5" fill="#fff"/><circle cx="16" cy="15" r="5" fill="#226"/></g></svg></button>
      <button aria-label="Ungroup"><svg viewBox="0 0 24 24"><g stroke="#333"><circle cx="12" cy="7" r="4" fill="#aaf"/><circle cx="6" cy="16" r="4" fill="#fff"/><circle cx="18" cy="16" r="4" fill="#226"/></g></svg></button>
      <button aria-label="Edit points"><svg viewBox="0 0 24 24"><path d="M2 6c9-1 16 5 16 15" fill="none" stroke="#111" stroke-width="2"/><path d="M5 5h3v3H5zM16 15h3v3h-3z" fill="#fff" stroke="#111"/></svg></button>
      <button class="fly" aria-label="Control points"><svg viewBox="0 0 24 24"><path d="M2 7c9-1 16 5 16 15" fill="none" stroke="#111" stroke-width="2.500"/><path d="M1 3h9l12 12v7" fill="none" stroke="#333" stroke-dasharray="2 1"/><path d="M8 2h3v3H8zM20 13h3v3h-3z" fill="#fff" stroke="#111"/></svg></button>
      <button aria-label="Text"><svg viewBox="0 0 24 24"><path d="M4 3l17 1v5h-3l-2-2h-1v12l3 3H9l1-3V7H7L4 9z" fill="url(#blue)" stroke="#124"/></svg></button>
      <button class="fly" aria-label="Move"><svg viewBox="0 0 24 24"><path d="M10 15l6-6" stroke="#111" stroke-width="1.500"/><path d="M16 8h-4l4 4z"/><path d="M3 14h6v6H3z" fill="#fff" stroke="#222" stroke-width="1.500"/><path d="M15 3h7v6h-7z" fill="#8fa6f0" stroke="#222" stroke-width="1.500"/></svg></button>
      <button aria-label="Copy"><svg viewBox="0 0 24 24"><g fill="#8fa6f0" stroke="#222" stroke-width="1.500"><path d="M3 3h6v6H3zM15 6h6v6h-6zM11 10h6v6h-6zM15 17h6v6h-6z"/><path d="M3 15h6v6H3z" fill="#fff"/></g></svg></button>
      <button aria-label="Rotate"><svg viewBox="0 0 24 24"><path d="M2 3h5v14H2z" fill="#fff" stroke="#222" stroke-width="1.500"/><path d="M9 20l10-11 4 3-10 10z" fill="#8fa6f0" stroke="#222" stroke-width="1.500"/><path d="M9 5c3-1 5 0 6 3M12 8h4V4" fill="none" stroke="#222"/></svg></button>
      <button class="fly" aria-label="Solid edit"><svg viewBox="0 0 24 24"><path d="M2 7l9-5 11 3v13l-9 4-11-3z" fill="#7f98e8" stroke="#111"/><path d="M2 7l11 3 9-5M13 10v12" fill="none" stroke="#111"/><path d="M9 15h8v7l-4 1-4-2z" fill="#fff" stroke="#222"/></svg></button>
      <button class="fly" aria-label="Array"><svg viewBox="0 0 24 24"><path d="M5 17h18l-4 4H1z" fill="#8fa6f0" stroke="#124"/><path d="M5 6v11M11 6v11M18 6v11" stroke="#fff" stroke-width="3"/></svg></button>
      <button class="fly" aria-label="Rectangular array"><svg viewBox="0 0 24 24"><path d="M2 2h4v4H2zM10 2h4v4h-4zM18 2h4v4h-4zM2 10h4v4H2zM10 10h4v4h-4zM18 10h4v4h-4zM2 18h4v4H2zM10 18h4v4h-4zM18 18h4v4h-4z" fill="#8fa6f0" stroke="#222" stroke-width="1.500"/></svg></button>
      <button class="fly" aria-label="Align"><svg viewBox="0 0 24 24"><path d="M7 2h10v5H7zM9 10h6v4H9zM8 17h8v6H8z" fill="#fff" stroke="#222" stroke-width="1.500"/><path d="M12 0v24" stroke="#c22" stroke-width="2"/></svg></button>
      <button class="fly" aria-label="Cage edit"><svg viewBox="0 0 24 24"><path d="M2 6l8-4v18l-8 2z" fill="#ddd" stroke="#222"/><path d="M14 4l7-2-4 18-7 2z" fill="url(#blue)" stroke="#111" stroke-width="1.500"/></svg></button>
      <button class="fly" aria-label="Check"><svg viewBox="0 0 24 24"><path d="M3 13l5 7L20 4" fill="none" stroke="#111" stroke-width="3"/></svg></button>
      <button class="fly" aria-label="Solids"><svg viewBox="0 0 24 24"><path d="M2 13l7-7 6 3v10l-6 2-7-3z" fill="#bbb" stroke="#222"/><path d="M17 6l6 12c-3 3-8 3-11 0z" fill="#999" stroke="#222"/></svg></button>
      <button class="fly" aria-label="Render tools"><svg viewBox="0 0 24 24"><path d="M12 9l9 10-9 4-9-4z" fill="#fb3" stroke="#531"/><path d="M8 4l5-3h9v4h-7l-3 2z" fill="#ddd" stroke="#222"/></svg></button>
    </div>

    <div class="stage">
      <div class="views">
        <section class="view on">
          <div class="tag"><span>Top</span><button aria-label="Top view menu"></button></div>
          <svg viewBox="0 0 837 635" role="img" aria-label="Top view">
            <g transform="translate(183 294) scale(.3333)">
              <path d="M40 91H1120" stroke="#8c0010" stroke-width="4"/>
              <g><use href="#x" x="26" y="77"/><use href="#x" x="225" y="77"/><use href="#x" x="238" y="77"/><use href="#x" x="252" y="77"/><use href="#x" x="266" y="77"/><use href="#x" x="591" y="77"/><use href="#x" x="603" y="77"/><use href="#x" x="615" y="77"/><use href="#x" x="629" y="77"/><use href="#x" x="644" y="77"/><use href="#x" x="693" y="77"/><use href="#x" x="949" y="77"/><use href="#x" x="969" y="77"/><use href="#x" x="990" y="77"/><use href="#x" x="1016" y="77"/><use href="#x" x="1038" y="77"/><use href="#x" x="1050" y="77"/><use href="#x" x="1106" y="77"/></g>
            </g>
            <g class="axes"><path d="M39 574v26h34"/><text x="42" y="575">y</text><text x="70" y="604">x</text></g>
          </svg>
        </section>
        <section class="view">
          <div class="tag"><span>Perspective</span><button aria-label="Perspective view menu"></button></div>
          <svg viewBox="0 0 823 635" role="img" aria-label="Perspective view">
            <g transform="translate(204 184) scale(.3333)">
              <path d="M596 95l490 103-13 241-64 143-58 193-28 136-22 19-311-96-261-80-184-56-11-156-9-162 158 41 314-95z" fill="#9c2226" fill-opacity=".5"/>
              <path class="edge" d="M596 95l490 103-13 241-64 143-2 28-54 137-2 28-28 136M596 95l2 382 388 100M597 325l476 114M597 325L283 420 125 379l9 139 2 24 9 131v25l184 56 261 80 311 96M283 420l5 140 11 28 20 138 10 28M134 518l154 42 309-83 11 28 378 101M136 542l163 46 309-83 17 150 9 29 40 150 228 71M145 673l174 53 306-71 307 86M329 754l305-70 296 86-28 135M590 834h84"/>
              <g><use href="#x" x="582" y="81"/><use href="#x" x="1072" y="184"/><use href="#x" x="1059" y="425"/><use href="#x" x="583" y="311"/><use href="#x" x="269" y="406"/><use href="#x" x="111" y="365"/><use href="#x" x="120" y="504"/><use href="#x" x="122" y="528"/><use href="#x" x="274" y="546"/><use href="#x" x="285" y="574"/><use href="#x" x="583" y="463"/><use href="#x" x="594" y="491"/><use href="#x" x="972" y="563"/><use href="#x" x="972" y="592"/><use href="#x" x="995" y="568"/><use href="#x" x="993" y="596"/><use href="#x" x="131" y="659"/><use href="#x" x="131" y="684"/><use href="#x" x="305" y="712"/><use href="#x" x="315" y="740"/><use href="#x" x="611" y="641"/><use href="#x" x="620" y="670"/><use href="#x" x="918" y="727"/><use href="#x" x="916" y="756"/><use href="#x" x="939" y="733"/><use href="#x" x="937" y="761"/><use href="#x" x="576" y="820"/><use href="#x" x="660" y="820"/><use href="#x" x="888" y="891"/><use href="#x" x="887" y="916"/><use href="#x" x="909" y="897"/></g>
            </g>
            <g class="axes"><path d="M39 577v25l28 6M39 602l14-9"/><text x="42" y="576">z</text><text x="55" y="591">y</text><text x="67" y="611">x</text></g>
          </svg>
        </section>
        <section class="view">
          <div class="tag"><span>Front</span><button aria-label="Front view menu"></button></div>
          <svg viewBox="0 0 837 631" role="img" aria-label="Front view">
            <path d="M454 2h383" stroke="#b5474d" stroke-width="2"/>
            <g transform="translate(183 146) scale(.3333)">
              <path d="M690 343h499l-56 164-49 195-24 195-26 30H118V538h198z" fill="#d84a52" fill-opacity=".53"/>
              <path d="M690 103h499v240H690z" fill="#ac2222" fill-opacity=".5"/>
              <path d="M357 927l375-195h352l-24 165H778l-100 30z" fill="#8f4d51" fill-opacity=".5"/>
              <path class="edge" d="M690 103h499v240H690zM690 343L316 538H118v389h916l0-30h26l24-195 49-164 56-195M690 343v164H1133M316 538v164H118M316 702l374-195 12 31H1133M118 732h210l374-194 18 164h364M328 732l17 165H118M345 897l375-195 12 30h352M357 927l375-195 46 165h256l26-195M678 927l100-30M316 702l12 30M345 897l12 30"/>
              <g><use href="#x" x="676" y="89"/><use href="#x" x="1175" y="89"/><use href="#x" x="676" y="329"/><use href="#x" x="1175" y="329"/><use href="#x" x="104" y="524"/><use href="#x" x="302" y="524"/><use href="#x" x="104" y="688"/><use href="#x" x="302" y="688"/><use href="#x" x="104" y="718"/><use href="#x" x="314" y="718"/><use href="#x" x="104" y="883"/><use href="#x" x="331" y="883"/><use href="#x" x="104" y="913"/><use href="#x" x="343" y="913"/><use href="#x" x="676" y="493"/><use href="#x" x="688" y="524"/><use href="#x" x="706" y="688"/><use href="#x" x="718" y="718"/><use href="#x" x="764" y="883"/><use href="#x" x="664" y="913"/><use href="#x" x="1096" y="493"/><use href="#x" x="1119" y="493"/><use href="#x" x="1096" y="524"/><use href="#x" x="1119" y="524"/><use href="#x" x="1047" y="688"/><use href="#x" x="1070" y="688"/><use href="#x" x="1047" y="718"/><use href="#x" x="1070" y="718"/><use href="#x" x="1021" y="883"/><use href="#x" x="1044" y="883"/><use href="#x" x="1021" y="913"/></g>
            </g>
            <g class="axes"><path d="M39 569v26h34"/><text x="42" y="570">z</text><text x="70" y="599">x</text></g>
          </svg>
        </section>
        <section class="view">
          <div class="tag"><span>Right</span><button aria-label="Right view menu"></button></div>
          <svg viewBox="0 0 823 631" role="img" aria-label="Right view">
            <g transform="translate(431 174) scale(.3333)">
              <path d="M0 0v825" stroke="#a5101c" stroke-width="4"/>
              <g><use href="#x" x="-14" y="-14"/><use href="#x" x="-14" y="226"/><use href="#x" x="-14" y="390"/><use href="#x" x="-14" y="420"/><use href="#x" x="-14" y="585"/><use href="#x" x="-14" y="615"/><use href="#x" x="-14" y="780"/><use href="#x" x="-14" y="811"/></g>
            </g>
            <g class="axes"><path d="M39 569v26h34"/><text x="42" y="570">z</text><text x="71" y="599">y</text></g>
          </svg>
        </section>
      </div>
      <nav class="view-tabs"><button>Perspective</button><button class="on">Top</button><button>Front</button><button>Right</button><button aria-label="New viewport"><svg viewBox="0 0 14 14"><path d="M5.500 1.500h3v4h4v3h-4v4h-3v-4h-4v-3h4z" fill="none" stroke="#555"/></svg></button></nav>
    </div>

    <aside class="props">
      <nav class="prop-tabs">
        <button class="on"><svg viewBox="0 0 24 24"><use href="#wheel"/></svg>P</button><button><svg viewBox="0 0 24 24"><use href="#layers"/></svg>L</button><button><svg viewBox="0 0 24 24"><path d="M2 3h20v15H2z" fill="#aaa" stroke="#222" stroke-width="2.500"/><path d="M8 19h8v3H8z"/></svg>Di</button><button><svg viewBox="0 0 24 24"><path d="M1 2h22v20H1z" fill="#6b85dd" stroke="#557"/><path d="M1 2h22v4H1z" fill="#338"/><path d="M7 18c-3-8 9-11 9-5s-4 3-4 3" fill="none" stroke="#fff" stroke-width="3"/></svg>H</button>
        <button class="cog" aria-label="Panel options"><svg viewBox="0 0 24 24"><use href="#gear"/></svg></button>
      </nav>
      <div class="sheet">
        <table>
          <tbody>
            <tr class="head"><th colspan="2" scope="rowgroup">Viewport</th></tr>
            <tr><th scope="row">Title</th><td>Top</td></tr>
            <tr><th scope="row">Width</th><td>835</td></tr>
            <tr><th scope="row">Height</th><td>634</td></tr>
            <tr><th scope="row"><label for="proj">Projection</label></th><td class="ctl"><select id="proj"><option>Parallel</option></select></td></tr>
          </tbody>
          <tbody>
            <tr class="head"><th colspan="2" scope="rowgroup">Camera</th></tr>
            <tr class="off"><th scope="row">Lens Le...</th><td>50.0</td></tr>
            <tr><th scope="row">X Locati...</th><td>8916.742</td></tr>
            <tr><th scope="row">Y Locati...</th><td>179.850</td></tr>
            <tr><th scope="row">Z Locati...</th><td>13225.648</td></tr>
            <tr><th scope="row">Location</th><td class="ctl"><button class="place">Place...</button></td></tr>
          </tbody>
          <tbody>
            <tr class="head"><th colspan="2" scope="rowgroup">Target</th></tr>
            <tr><th scope="row">X Target</th><td>8916.742</td></tr>
            <tr><th scope="row">Y Target</th><td>179.850</td></tr>
            <tr><th scope="row">Z Target</th><td>4116.912</td></tr>
            <tr><th scope="row">Location</th><td class="ctl"><button class="place">Place...</button></td></tr>
          </tbody>
          <tbody>
            <tr class="head"><th colspan="2" scope="rowgroup">Wallpaper</th></tr>
            <tr><th scope="row">Filename</th><td class="ctl file"><div><span>(none)</span><button>...</button></div></td></tr>
            <tr><th scope="row"><label for="show">Show</label></th><td class="ctl"><input type="checkbox" id="show" checked></td></tr>
            <tr><th scope="row"><label for="gray">Gray</label></th><td class="ctl"><input type="checkbox" id="gray" checked></td></tr>
          </tbody>
        </table>
      </div>
    </aside>
  </div>

  <footer class="rh-status">
    <span class="s1">CPlane</span><span class="s2">x -5574.66</span><span class="s2">y 6898.77</span><span class="s2 mid">z 0.00</span><span class="unit">Millimeters</span><span class="s3"><i></i>Default</span>
    <button>Grid Snap</button><button>Ortho</button><button>Planar</button><button>Osnap</button><button class="on">SmartTrack</button><button>Gumball</button><button>Record History</button><button>Filter</button><span class="mem">Memory use: 257 MB</span>
  </footer>
</section>
</div>
</body>
</html>
```
FILE: styles.css
```css
* { box-sizing: border-box; }
html, body { height: 100%; margin: 0; }
body { font: 16px/20px "Liberation Sans", Arial, sans-serif; color: #111; overflow: hidden; }
button { font: inherit; color: inherit; background: none; border: 0; padding: 0; margin: 0; white-space: nowrap; }
h1, h2, p { margin: 0; font-weight: normal; }
svg { display: block; }
select { appearance: none; border-radius: 0; font: inherit; }
.defs { position: absolute; width: 0; height: 0; }

.desktop { display: grid; grid-template-columns: 79fr 241fr; height: 100%; }
.gh, .rh { display: flex; flex-direction: column; min-width: 0; min-height: 0; }

/* window chrome */
.titlebar { display: flex; align-items: center; height: 44px; padding-left: 9px; background: #fff; }
.titlebar h1 { font: 17px/24px "Open Sans", "Noto Sans", sans-serif; white-space: nowrap; }
.winbtns { display: flex; margin-left: auto; }
.winbtns button { display: grid; place-items: center; width: 70px; height: 44px; }
.winbtns svg { width: 15px; height: 15px; fill: none; stroke: currentColor; overflow: visible; }

/* Grasshopper */
.gh { border: 2px solid #3a78b4; border-width: 1px 2px 0; background: #f2f2f2; padding-left: 1px; }
.gh-menu { display: flex; align-items: center; gap: 20px; height: 30px; padding: 0 8px 0 17px; font-size: 17px; }
.doc { margin-left: auto; }
.gh-tabs { display: flex; height: 22px; gap: 19px; padding: 0 12px 0 0; color: #777; }
.gh-tabs .on { height: 23px; padding: 0 10px 0 8px; margin-right: -8px; color: #111; background: #fff; border: 1px solid #999; border-bottom: 0; border-radius: 6px 8px 0 0; }
.ribbon { display: flex; align-items: flex-start; gap: 3px; height: 91px; padding: 2px 1px; background: linear-gradient(#d2d2d2, #d8d8d8 65%, #f0f0f0); border-top: 1px solid #aaa; border-radius: 0 6px 0 0; }
.group { height: 74px; border: 1px solid #888; border-radius: 4px; background: linear-gradient(#dedede, #c8c8c8); overflow: hidden; display: flex; flex-direction: column; }
.g-geo { width: 193px; } .g-prim { width: 61px; } .g-in { width: 137px; } .g-util { width: 109px; }
.cells { flex: 1; display: flex; align-items: center; justify-content: space-between; padding: 0 3px; }
.cols { display: grid; gap: 5px 4px; }
.c2 { grid-template-columns: 24px 24px; }
.c3 { grid-template-columns: 24px 24px 24px; }
.cols + .cols { border-left: 1px solid #b0b0b0; padding-left: 6px; }
.cols svg { width: 24px; height: 24px; }
.group h2 { display: flex; justify-content: center; height: 14px; font-size: 11px; line-height: 13px; color: #fff; background: #222; position: relative; }
.group h2 b { position: absolute; right: 2px; top: 0; color: #aaa; }
.g-prim h2 { justify-content: flex-start; padding-left: 5px; }
.hx { font: bold 17px "Liberation Serif", serif; fill: #fff; text-anchor: middle; }
.hx.mid { font-size: 13px; }
.q { font: bold 19px "Liberation Serif", serif; fill: #fff; text-anchor: middle; }

.gh-bar { display: flex; align-items: center; gap: 5px; height: 37px; padding: 0 1px 1px 4px; background: linear-gradient(#fff, #e8e8e8); border-top: 2px solid #666; }
.gh-bar svg { width: 24px; height: 24px; }
.gh-bar .rule { width: 1px; height: 26px; background: #bbb; }
.grow { flex: 1; }
.drop { width: 0; border: 3px solid transparent; border-top: 4px solid #111; border-bottom: 0; }
.picked { border: 1px solid #2a7ad0; padding: 4px 1px; background: #fff; }
.zoom, #proj { background-color: #fff; background-image: linear-gradient(45deg, transparent 45%, #444 45% 58%, transparent 58%), linear-gradient(-45deg, transparent 45%, #444 45% 58%, transparent 58%); background-size: 6px 6px; background-repeat: no-repeat; background-position: right 13px center, right 8px center; }
.zoom { width: 103px; height: 34px; padding-left: 3px; font-size: 20px; border: 1px solid #777; color: #111; }

.canvas { position: relative; flex: 1; min-height: 0; overflow: hidden; background-color: #d4d0c8; background-image: linear-gradient(90deg, #c2beb6 1px, transparent 1px), linear-gradient(#bfbbb4 1px, transparent 1px); background-size: 150px 50px; background-position: 13px 35px; }
.wires { position: absolute; inset: 0; width: 100%; height: 100%; }
.node { position: absolute; display: flex; align-items: center; justify-content: center; text-align: center; padding-right: 8px; border: 1px solid #222; border-radius: 3px; background: #fffa5a; font: 16px/18px "Liberation Mono", "Courier New", monospace; box-shadow: inset 0 1px #ffffb0; }
.node.hot { background: #ff0; }
.node.title { background: #a5ffff; font-size: 84px; line-height: 88px; justify-content: flex-start; padding: 6px 0 0 24px; }
.node::before, .node::after, .slider::after { content: ""; position: absolute; top: 50%; width: 5px; height: 10px; margin-top: -6px; border: 2px solid #000; background: #fff; }
.node::before { right: 100%; border-right: 0; border-radius: 5px 0 0 5px; }
.node::after, .slider::after { left: 100%; border-left: 0; border-radius: 0 5px 5px 0; }
.slider { position: absolute; display: flex; align-items: center; height: 21px; padding: 0 6px 0 9px; border: 1px solid #222; border-radius: 3px; background: linear-gradient(90deg, #9a9aaa 4px, #222 4px 5px, transparent 5px calc(100% - 6px), #222 calc(100% - 6px) calc(100% - 5px), #9a9aaa 0), linear-gradient(#ddd, #eee 40%, #aaa); line-height: 19px; }
.slider output { display: flex; margin-left: auto; }
.slider i, .slider b, .slider u { width: 13px; text-align: center; font-style: normal; font-weight: normal; text-decoration: none; border-left: 1px solid #c4c4c4; background: #e6e6e6; }
.slider i { color: #bbb; }
.slider u { width: 9px; background: #c4c4c4; }
.stub { position: absolute; left: 0; bottom: 0; width: 7px; height: 27px; background: #888; border: 1px solid #111; border-left: 0; }
.compass { position: absolute; right: 4px; bottom: 5px; width: 48px; height: 52px; }
.gh-status { display: flex; align-items: center; gap: 5px; height: 26px; padding: 6px 3px 0 2px; font-size: 17px; }
.gh-status svg { width: 16px; height: 16px; }
.ver { margin-left: auto; font-size: 16px; color: #888; }
.grip { width: 12px; height: 12px; margin-left: 8px; background: radial-gradient(#aaa 1px, transparent 2px) 0 0 / 4px 4px; clip-path: polygon(100% 0, 100% 100%, 0 100%); }

/* Rhinoceros */
.rh { background: #dfe2ea; border-top: 1px solid #334; border-right: 2px solid #334; }
.titlebar.dim { height: 47px; color: #999; padding-left: 12px; gap: 6px; }
.logo { width: 24px; height: 24px; }
.dim .winbtns { margin-right: -1px; }
.rh-menu { display: flex; align-items: center; gap: 16px; height: 25px; padding-left: 9px; color: #777; background: #fff; font: 16px/24px "Open Sans", "Noto Sans", sans-serif; }
.command { display: grid; grid-template-columns: 1fr 24px; grid-template-rows: 43px 24px; margin: 5px 1px 3px 6px; background: #fff; font-size: 18px; }
.history { border-bottom: 1px solid #99a; padding-left: 3px; line-height: 21px; overflow: hidden; white-space: nowrap; }
.scroll { background: #f0f0f0; border-bottom: 1px solid #99a; }
.scroll svg { width: 24px; height: 42px; }
.prompt { display: flex; align-items: center; padding: 0 0 2px 3px; font-weight: bold; }
.prompt input { flex: 1; border: 0; outline: 0; font: inherit; background: none; }
.spin { display: grid; gap: 1px; padding: 1px; }
.spin button { display: grid; place-items: center; border: 1px solid #999; background: #eee; }
.spin svg { width: 10px; height: 6px; }
.rh-tabs { display: flex; align-items: flex-end; height: 29px; padding-left: 10px; border-top: 1px solid #c2c6ce; border-bottom: 1px solid #9a9fb0; }
.rh-tabs button { position: relative; height: 23px; padding: 0 15px; border-top: 1px solid #a4a9ba; background: #d2d7e6; line-height: 24px; }
.rh-tabs button + button::before { content: ""; position: absolute; top: -1px; left: -7px; width: 10px; height: 23px; background: #d2d7e6; border-left: 1px solid #a4a9ba; transform: skewX(-31deg); }
.rh-tabs .on { background: #f6f7fa; border-right: 1px solid #a4a9ba; height: 24px; padding: 0 13px 0 14px; margin-bottom: -1px; border-radius: 8px 3px 0 0; }
.rh-tabs .on + button::before { display: none; }
.rh-tabs button:nth-last-child(2) { border-right: 1px solid #a4a9ba; border-radius: 0 3px 0 0; }
.rh-tabs .cog, .prop-tabs .cog { margin-left: auto; padding: 0 1px; border: 0; background: none; align-self: center; }
.rh-tabs button.cog::before { display: none; }
.cog svg { width: 16px; height: 16px; }
.rh-bar { display: flex; gap: 2px; height: 39px; padding: 3px 0 0 8px; background: linear-gradient(#f3f4f7, #dfe2ea); }
.rh-bar button, .palette button { position: relative; width: 26px; height: 26px; display: grid; place-items: center; }
.rh-bar svg { width: 22px; height: 22px; }
.fly::after { content: ""; position: absolute; right: -1px; bottom: 0; border: 3px solid #666; border-top-color: transparent; border-left-color: transparent; }

.work { flex: 1; display: grid; grid-template-columns: 65px 1fr 199px; min-height: 0; }
.palette { display: grid; grid-template-columns: 28px 28px; grid-auto-rows: 28px; align-content: start; padding: 7px 0 0 2px; background: linear-gradient(90deg, #b4b8c2, #dfe2ea 10px); }
.palette button { width: 28px; height: 28px; }
.palette svg { width: 22px; height: 22px; }
.stage { display: flex; flex-direction: column; min-width: 0; }
.views { flex: 1; display: grid; grid-template-columns: 837fr 823fr; grid-template-rows: 635fr 631fr; gap: 3px 2px; min-height: 0; }
.view { position: relative; background: #9ca2aa; min-width: 0; min-height: 0; overflow: hidden; }
.view > svg { width: 100%; height: 100%; }
.tag { position: absolute; left: 0; top: 0; display: flex; align-items: center; height: 28px; padding-left: 10px; background: #c0c4cb; color: #555; font: 17px/28px "Open Sans", "Noto Sans", sans-serif; }
.on > .tag { background: #8ba6c4; color: #123; }
.tag button { width: 13px; height: 22px; margin-left: 8px; border-left: 1px solid #333; display: grid; place-items: center; }
.tag button::after { content: ""; border: 4px solid transparent; border-top: 5px solid #333; border-bottom: 0; }
.edge { fill: none; stroke: #92000e; stroke-width: 4; }
.axes path { fill: none; stroke: #6a7078; }
.axes text { font: 14px "Liberation Sans", sans-serif; fill: #555b63; }
.view-tabs { display: flex; height: 29px; padding-bottom: 1px; font: 17px/24px "Open Sans", "Noto Sans", sans-serif; }
.view-tabs button { position: relative; height: 28px; padding: 3px 10px 0 14px; background: #d0d5e6; border: 1px solid #aab; border-width: 0 1px 1px 0; border-radius: 0 0 4px 0; }
.view-tabs button::before { content: ""; position: absolute; left: -1px; top: 0; width: 12px; height: 28px; background: #dfe2ea; border-right: 1px solid #aab; clip-path: polygon(0 0, 2px 0, 100% 100%, 0 100%); }
.view-tabs button + button::before { background: linear-gradient(67deg, #d0d5e6 46%, #aab 48% 52%, transparent 54%); border: 0; clip-path: none; height: 27px; }
.view-tabs .on { background: #fff; }
.view-tabs button:last-child { background: none; padding: 0 15px 0 19px; }
.view-tabs button:last-child svg { width: 14px; height: 14px; }

.props { display: flex; flex-direction: column; padding: 3px 0 0 7px; }
.prop-tabs { display: flex; height: 26px; padding-top: 4px; border-top: 3px double #aeb3c0; }
.prop-tabs button { display: flex; align-items: center; gap: 3px; width: 41px; padding-left: 3px; overflow: hidden; background: #d2d7e6; border: 1px solid #a4a9ba; border-bottom: 0; border-radius: 3px 6px 0 0; }
.prop-tabs .on { background: #f7f7f9; }
.prop-tabs .cog { width: 18px; }
.prop-tabs svg { flex: none; width: 16px; height: 16px; }
.sheet { flex: 1; background: #f7f7f9; border: 1px solid #a4a9ba; border-width: 0 1px 0 1px; padding: 8px 7px 0 0; }
table { width: 100%; table-layout: fixed; border-collapse: collapse; }
th, td { height: 26px; padding: 0 0 0 4px; text-align: left; font-weight: normal; border: 1px solid #dde0e6; background: #fff; white-space: nowrap; overflow: hidden; }
tr:not(.head) th { border-left: 12px solid #f7f7f9; padding-left: 6px; }
.head th { height: 32px; padding-left: 0; background: #f7f7f9; }
.off { color: #888; }
.off td { background: #dfe2ea; }
td.ctl { padding: 0; }
#proj { display: block; width: 100%; height: 25px; padding-left: 3px; border: 0; color: inherit; background-image: linear-gradient(45deg, transparent 45%, #444 45% 58%, transparent 58%), linear-gradient(-45deg, transparent 45%, #444 45% 58%, transparent 58%), linear-gradient(#e2e2e2, #e2e2e2); background-size: 6px 6px, 6px 6px, 25px 100%; background-position: right 12px center, right 7px center, right center; }
.place { display: block; width: 100%; height: 24px; border: 1px solid #aaa; background: #e2e2e2; }
.file div { display: flex; justify-content: space-between; padding-left: 3px; line-height: 24px; }
.file button { width: 24px; height: 24px; border: 1px solid #aaa; background: #e2e2e2; }
input[type=checkbox] { appearance: none; display: block; width: 23px; height: 23px; margin: 0 0 0 2px; border: 1px solid #222; background: #fff; }
input[type=checkbox]::after { content: ""; display: block; width: 13px; height: 6px; margin: 5px 0 0 4px; border: 2px solid #222; border-width: 0 0 2px 2px; transform: rotate(-45deg); }

.rh-status { display: flex; height: 24px; padding-left: 2px; border-top: 1px solid #9a9fb0; font-size: 18px; line-height: 24px; white-space: nowrap; }
.rh-status > * { padding: 1px 4px 0; overflow: hidden; border-right: 1px solid #b0b4c0; line-height: 24px; }
.rh-status .s1 { width: 65px; }
.rh-status .s2 { width: 88px; padding-right: 0; }
.rh-status .mid { padding-left: 18px; }
.rh-status .unit { width: 92px; padding: 1px 0 0 3px; }
.rh-status .s3 { display: flex; align-items: center; gap: 1px; width: 171px; padding-left: 1px; }
.s3 i { width: 19px; height: 19px; background: #000; }
.rh-status button { padding: 1px 5px 0; }
.rh-status .on { background: #e2f2fc; font-weight: bold; }
.rh-status .mem { border: 0; }
```
